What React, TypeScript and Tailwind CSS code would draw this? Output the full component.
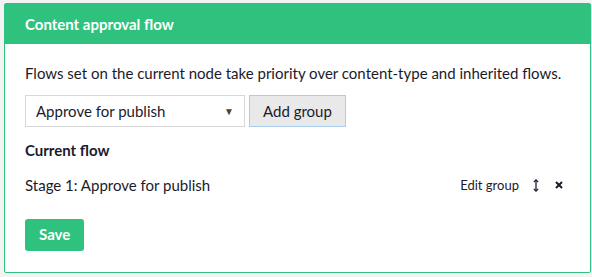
export default function App() {
    return (
        <div className="min-h-[277px] bg-[#f3f3f3] pt-[3px] pl-[4px] pr-[1px] pb-[4px] font-['Lato',sans-serif]">
            <div className="border border-[#2ec27e] rounded-[2px] bg-white w-[587px] h-[270px]">
                {/* Header */}
                <div className="h-[40px] bg-[#2ec27e] pl-[20px] flex items-center">
                    <h2 className="text-white font-bold text-[15px]">Content approval flow</h2>
                </div>

                <div className="px-[20px] pt-[18px]">
                    <p className="text-[15px] text-[#1b1b2b] leading-[22px]">
                        Flows set on the current node take priority over content-type and inherited flows.
                    </p>

                    <div className="flex items-center gap-[4px] mt-[11px]">
                        <div className="w-[220px] h-[32px] border border-[#d8d8d8] flex items-center justify-between px-[10px] text-[15px] text-[#1b1b2b]">
                            <span>Approve for publish</span>
                            <span className="text-[10px] text-[#444]">▼</span>
                        </div>
                        <button className="h-[32px] px-[13px] bg-[#e9e9e9] border border-[#a9cdee] text-[15px] text-[#1b1b2b]">
                            Add group
                        </button>
                    </div>

                    <h3 className="font-bold text-[15px] text-[#1b1b2b] mt-[12px] leading-[22px]">Current flow</h3>

                    <div className="flex items-center justify-between mt-[13px] text-[#1b1b2b]">
                        <span className="text-[15px]">Stage 1: Approve for publish</span>
                        <div className="flex items-center mr-[7px] text-[13px]">
                            <span>Edit group</span>
                            {/* reorder handle */}
                            <svg className="ml-[14px]" width="6" height="13" viewBox="0 0 6 13" fill="none">
                                <path d="M3 1.5v10" stroke="#1b1b3b" strokeWidth="1.3" />
                                <path d="M0.8 3.2L3 0.8l2.2 2.4M0.8 9.8L3 12.2l2.2-2.4" stroke="#1b1b3b" strokeWidth="1.2" />
                            </svg>
                            {/* remove */}
                            <svg className="ml-[16px]" width="8" height="8" viewBox="0 0 8 8">
                                <path d="M1 1l6 6M7 1L1 7" stroke="#1b1b2b" strokeWidth="2" />
                            </svg>
                        </div>
                    </div>

                    <button className="mt-[22px] h-[32px] px-[14px] bg-[#2ec27e] rounded-[3px] text-white font-bold text-[15px]">
                        Save
                    </button>
                </div>
            </div>
        </div>
    )
}
